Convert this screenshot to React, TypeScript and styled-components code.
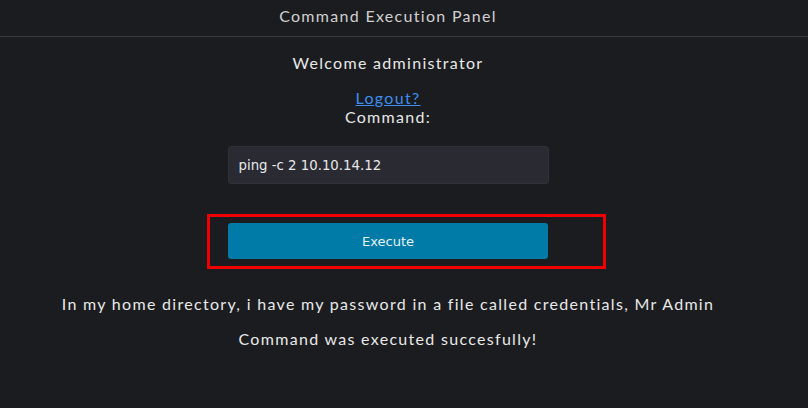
import React from "react";
import styled, { createGlobalStyle } from "styled-components";

const Global = createGlobalStyle`
  html, body { margin: 0; padding: 0; background: #1b1c1f; }
  body { font-family: "Lato", "DejaVu Sans", sans-serif; color: #e8e8e8; }
`;

const Page = styled.div`
  width: 808px;
  height: 408px;
  background: #1b1c1f;
  display: flex;
  flex-direction: column;
`;

const Header = styled.header`
  width: 100%;
  height: 37px;
  border-bottom: 1px solid #3b3c3f;
  box-sizing: border-box;
`;

const HeaderTitle = styled.h1`
  width: 776px;
  margin: 0;
  padding-top: 5px;
  text-align: center;
  font-weight: 400;
  font-size: 16px;
  line-height: 22px;
  letter-spacing: 1.3px;
  color: #d0d0d0;
`;

const Main = styled.main`
  width: 776px;
  display: flex;
  flex-direction: column;
  align-items: center;
`;

const Text = styled.p<{ $top: number }>`
  margin: ${(p) => p.$top}px 0 0;
  font-size: 16px;
  line-height: 20px;
  letter-spacing: 1.3px;
`;

const Logout = styled.a`
  margin-top: 16px;
  font-size: 16px;
  line-height: 18px;
  letter-spacing: 1.3px;
  color: #3d8ef0;
  text-decoration: underline;
`;

const Label = styled.label`
  font-size: 16px;
  line-height: 18px;
  letter-spacing: 1.3px;
  margin-top: 1px;
`;

const Input = styled.input`
  margin-top: 20px;
  width: 321px;
  height: 38px;
  box-sizing: border-box;
  background: #2a2a33;
  border: 1px solid #303038;
  border-radius: 3px;
  color: #e8e8e8;
  font-family: "DejaVu Sans", sans-serif;
  font-size: 13.3px;
  padding: 0 10px;
  outline: none;
`;

const Highlight = styled.div`
  margin: 30px 0 0 37px;
  box-sizing: border-box;
  border: 3px solid #f00000;
  padding: 6px 55px 7px 18px;
  display: flex;
`;

const Button = styled.button`
  width: 320px;
  height: 36px;
  background: #007ba7;
  border: none;
  border-radius: 3px;
  color: #e6f2f7;
  font-family: "DejaVu Sans", sans-serif;
  font-size: 13px;
`;

export default function App() {
  return (
    <>
      <Global />
      <Page>
        <Header>
          <HeaderTitle>Command Execution Panel</HeaderTitle>
        </Header>
        <Main>
          <Text $top={16}>Welcome administrator</Text>
          <Logout href="#">Logout?</Logout>
          <Label>Command:</Label>
          <Input defaultValue="ping -c 2 10.10.14.12" />
          <Highlight>
            <Button>Execute</Button>
          </Highlight>
          <Text $top={25}>
            In my home directory, i have my password in a file called credentials, Mr Admin
          </Text>
          <Text $top={15}>Command was executed succesfully!</Text>
        </Main>
      </Page>
    </>
  );
}
